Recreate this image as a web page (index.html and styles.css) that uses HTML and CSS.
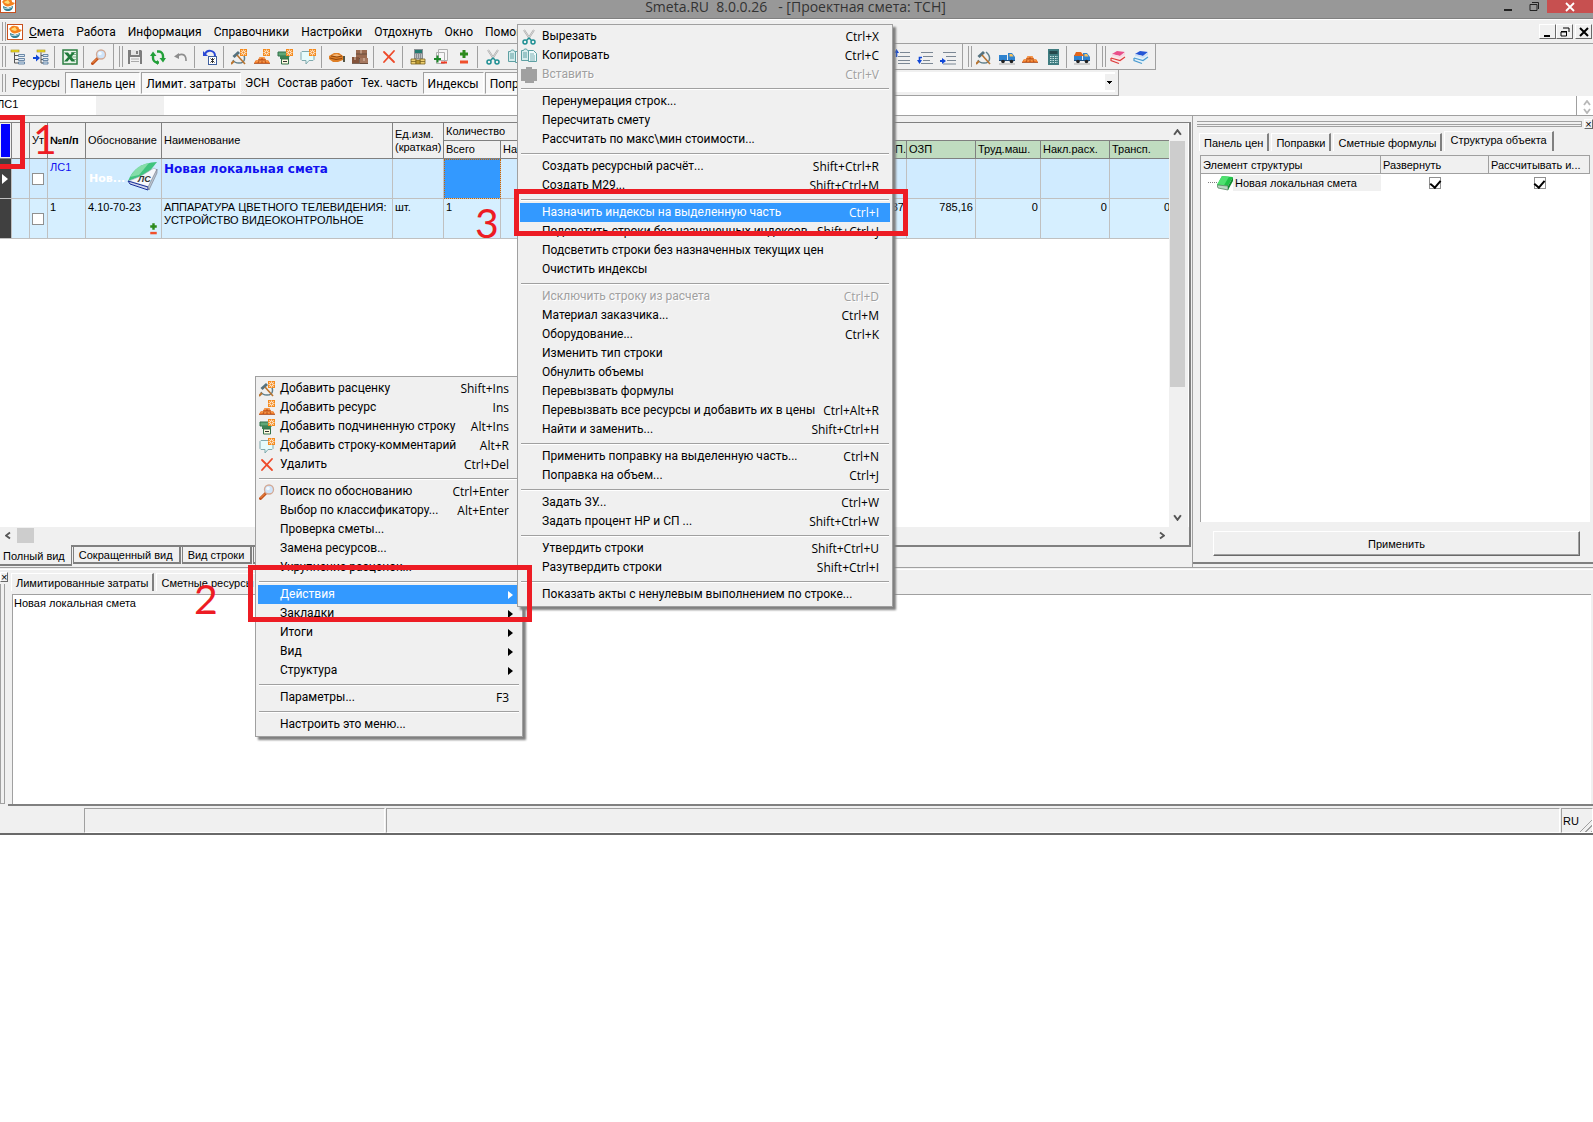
FILE: index.html
```html
<!DOCTYPE html>
<html lang="ru">
<head>
  <meta charset="UTF-8">
  <title>Smeta.RU</title>
  <link rel="stylesheet" href="styles.css">
</head>
<body>
  <!-- icon set -->
  <svg class="sprite" aria-hidden="true">
    <symbol id="i-app" viewBox="0 0 16 16">
      <rect x=".5" y=".5" width="15" height="15" fill="#fff" stroke="#c8501e"/>
      <path d="M3 9c0 3 2 5 5 5s5-2 5-5l-5 2z" fill="#2f7d92"/>
      <path d="M4 11c3 1 5 1 8-1" stroke="#b8d8e0" fill="none"/>
      <path d="M2 5c2-3 4-4 6-3 3 0 4 1 4 3l3 1-2 2-3 1c-3 1-6 0-7-3z" fill="#f5821f"/>
      <path d="M4 5l4-2 2 3-2 1-3-1z" fill="#ffd872"/>
    </symbol>
    <symbol id="i-tree" viewBox="0 0 16 16">
      <rect x="1" y="1" width="8" height="2" fill="#f4e21c" stroke="#a08a20" stroke-width=".6"/>
      <path d="M4.500 3.500v10.500M4.500 6.500h4M4.500 10.500h4M4.500 14h4" stroke="#555" fill="none"/>
      <path d="M8.500 5.500h6v2h-6zM8.500 9.500h6v2h-6zM8.500 13h6v2h-6z" fill="#dbe9f5" stroke="#4b6f94" stroke-width=".8"/>
    </symbol>
    <symbol id="i-tree-in" viewBox="0 0 16 16">
      <rect x="4" y="1" width="8" height="2" fill="#f4e21c" stroke="#a08a20" stroke-width=".6"/>
      <path d="M8 3.500v10.500M8 6.500h2M8 10.500h2M8 14h2" stroke="#555" fill="none"/>
      <path d="M10 5.500h5v2h-5zM10 9.500h5v2h-5zM10 13h5v2h-5z" fill="#dbe9f5" stroke="#4b6f94" stroke-width=".8"/>
      <path d="M0 8h3V5.500L7 9l-4 3.500V10H0z" fill="#1047d8"/>
    </symbol>
    <symbol id="i-excel" viewBox="0 0 16 16">
      <rect x="1" y="1" width="14" height="14" fill="#e9f4ea" stroke="#2d7f43" stroke-width="1.500"/>
      <path d="M9 3.500h5M9 5.500h5M9 8h5M9 10.500h5" stroke="#5aa06c" stroke-width=".8"/>
      <path d="M2 3.500h4l2 2.500 2-2.500h3L9.500 8l4 4.500H9.500L7.500 10l-2 2.500H2L6 8z" fill="#1f7a3a"/>
    </symbol>
    <symbol id="i-lens" viewBox="0 0 16 16">
      <path d="M1.500 14.500L7 9" stroke="#c4511b" stroke-width="3" stroke-linecap="round"/>
      <path d="M1.500 14L6 9.500" stroke="#f39a50" stroke-width="1"/>
      <circle cx="10" cy="5.500" r="4.500" fill="#cfe4fa" stroke="#d3a995" stroke-width="1.300"/>
      <circle cx="9" cy="4.500" r="1.800" fill="#f3faff"/>
    </symbol>
    <symbol id="i-save" viewBox="0 0 16 16">
      <path d="M1 1h13l1 1v13H1z" fill="#7d7d7d"/>
      <path d="M4 1h8v5H4z" fill="#e4e4e4"/><path d="M9 2h2v3H9z" fill="#7d7d7d"/>
      <path d="M3 8h10v7H3z" fill="#f0f0f0"/><path d="M4 10h8M4 12.500h8" stroke="#aaa"/>
    </symbol>
    <symbol id="i-refresh" viewBox="0 0 16 16">
      <path d="M9 13.500H7A4.500 4.500 0 0 1 3 9V6M7 2.500h2A4.500 4.500 0 0 1 13 7v3" fill="none" stroke="#23a03a" stroke-width="2.400"/>
      <path d="M0 7l3-4.500L6.500 7zM9.500 9H16l-3 4.500zM8 11v5l-3-2.500z" fill="#23a03a"/>
    </symbol>
    <symbol id="i-undo" viewBox="0 0 16 16">
      <path d="M4 7c4-3 9-2 9 4v1" fill="none" stroke="#8d8d8d" stroke-width="1.600"/>
      <path d="M1 7.500L6 4v6z" fill="#8d8d8d"/>
    </symbol>
    <symbol id="i-recalc" viewBox="0 0 16 16">
      <path d="M3 5c2-5 10-4 10 2" fill="none" stroke="#2b49d6" stroke-width="2"/>
      <path d="M1 2v5h5z" fill="#2b49d6"/>
      <rect x="6.500" y="7.500" width="8" height="8" fill="#fff" stroke="#3e5f9e"/>
      <path d="M8.500 9.500l4 4M12.500 9.500l-4 4M10.500 9v5" stroke="#333"/>
    </symbol>
    <symbol id="i-hammer" viewBox="0 0 16 16">
      <path d="M10 3c5 4 5 11-2 11-3 0-5-1-6-3" fill="none" stroke="#5e7f8c" stroke-width="1.500"/>
      <path d="M0 15L3 12" stroke="#b9742f" stroke-width="2"/>
      <path d="M2.500 8L8 3" stroke="#54727f" stroke-width="3"/>
      <path d="M6 6l8 9" stroke="#b9742f" stroke-width="1.600"/>
    </symbol>
    <symbol id="i-star" viewBox="0 0 16 16">
      <rect x="9" y="0" width="7" height="7" fill="#f58a1c"/>
      <circle cx="12.500" cy="3.500" r="1.600" fill="none" stroke="#fff" stroke-width="1"/>
      <path d="M12.500 .5v1M12.500 5.500v1M9.500 3.500h1M14.500 3.500h1M10.300 1.300l.8.800M14.700 1.300l-.8.800M10.300 5.700l.8-.8M14.700 5.700l-.8-.8" stroke="#fff" stroke-width=".8"/>
    </symbol>
    <symbol id="i-bricks" viewBox="0 0 16 16">
      <path d="M0 13l2-3h2l1.500-3h5L12 10h2l2 3z" fill="#ee7a28"/>
      <path d="M5 8h6M2 11h12" stroke="#f9b06d" stroke-width="1"/>
      <path d="M4 10h8M0 13.500h16M5 11l-1 2M8 8v2M8 11v2M11 11l1 2" stroke="#a8430f" stroke-width=".8"/>
    </symbol>
    <symbol id="i-rate-add" viewBox="0 0 16 16"><use href="#i-hammer"/><use href="#i-star"/></symbol>
    <symbol id="i-res-add" viewBox="0 0 16 16">
      <g transform="translate(0 1)"><use href="#i-bricks" width="16" height="16"/></g><use href="#i-star"/>
    </symbol>
    <symbol id="i-sub-add" viewBox="0 0 16 16">
      <path d="M1 3h12v4H1z" fill="#5fa777" stroke="#33704a"/>
      <path d="M3 7h9v3H3z" fill="#3c8254"/>
      <path d="M4.500 10h7v5h-7z" fill="#fffbe0" stroke="#33704a"/><path d="M6 12.500h4" stroke="#333"/>
      <use href="#i-star"/>
    </symbol>
    <symbol id="i-note-add" viewBox="0 0 16 16">
      <path d="M2 2.500h11l1 1v7l-1 1H9L6 15v-3.500H2l-1-1v-7z" fill="#e6fbfb" stroke="#7fa9ad"/>
      <use href="#i-star"/>
    </symbol>
    <symbol id="i-hands" viewBox="0 0 16 16">
      <path d="M0 7l5-3h5l4 3v4l-5 2H4L0 10z" fill="#df7f26"/>
      <path d="M3 6l5-1 4 2-5 1z" fill="#f6b878"/>
      <path d="M2 7l6 1 5-1M1 9l6 1.500 6-1" stroke="#8e450b" fill="none"/>
      <path d="M14 7h2v6h-2z" fill="#554"/>
    </symbol>
    <symbol id="i-boxes" viewBox="0 0 16 16">
      <path d="M4 1h11v9H4z" fill="#9a6a50"/><path d="M0 8h7v6H0z" fill="#84543c"/><path d="M8 9h8v6H8z" fill="#a67860"/>
      <path d="M9 1v4M12 9v3M3 8v3" stroke="#e1c4b0"/><path d="M4 5h11M0 14.500h16M7.500 9v5" stroke="#5c4436" stroke-width=".8"/>
    </symbol>
    <symbol id="i-delete" viewBox="0 0 16 16">
      <path d="M3 3l10 10M13 2L3 13" stroke="#ee4a2a" stroke-width="1.800" stroke-linecap="round"/>
    </symbol>
    <symbol id="i-calc-coins" viewBox="0 0 16 16">
      <path d="M4 0h9v10H4z" fill="#8a8f93"/><path d="M5 1h7v3H5z" fill="#227b70"/>
      <path d="M5 6h7M5 8h7" stroke="#eee" stroke-dasharray="1 1"/>
      <path d="M1 10h5v5H1zM10 10h5v5h-5z" fill="#f0d070" stroke="#7a6320" stroke-width=".8"/>
      <path d="M1 12.500h5M10 12.500h5M6 11h4v4H6z" stroke="#7a6320" stroke-width=".8" fill="#b8962e"/>
    </symbol>
    <symbol id="i-doc-pm" viewBox="0 0 16 16">
      <path d="M5.500 .5h9v11h-9zM3.500 3.500h8v11h-8z" fill="#f7f7f7" stroke="#b0b0b0"/>
      <path d="M1 10h7M4.500 6.500v7" stroke="#1e8a2a" stroke-width="2"/>
      <path d="M8 13.500h6" stroke="#ee3a24" stroke-width="2"/>
    </symbol>
    <symbol id="i-pm" viewBox="0 0 16 16">
      <path d="M4 5h8M8 1v8" stroke="#2d8b1d" stroke-width="3"/>
      <path d="M4 13h8" stroke="#f0502c" stroke-width="3"/>
    </symbol>
    <symbol id="i-cut" viewBox="0 0 16 16">
      <path d="M3 1l6 9M13 1L7 10" stroke="#a8a8a8" stroke-width="2"/>
      <path d="M3 1l6 9M13 1L7 10" stroke="#eee" stroke-width=".7"/>
      <circle cx="4" cy="13" r="2" fill="none" stroke="#1e8f93" stroke-width="1.500"/>
      <circle cx="12" cy="13" r="2" fill="none" stroke="#1e8f93" stroke-width="1.500"/>
      <path d="M5.500 11.500L8 9l2.500 2.500" fill="none" stroke="#1e8f93" stroke-width="1.300"/>
    </symbol>
    <symbol id="i-copy" viewBox="0 0 16 16">
      <path d="M.5 2.500h2l1-1.500h2l1 1.500h2v10h-8z" fill="#d5ecec" stroke="#5fa0a3"/>
      <path d="M2 5h4M2 7h4M2 9h4" stroke="#5fa0a3"/>
      <path d="M7.500 2.500h5l3 3v8h-8z" fill="#effafa" stroke="#5fa0a3"/>
      <path d="M9 6h4M9 8h5M9 10h5M9 12h5" stroke="#5fa0a3" stroke-width=".8"/>
    </symbol>
    <symbol id="i-paste" viewBox="0 0 16 16">
      <path d="M0 2h5V0h6v2h5v12h-3v2H4v-2H0z" fill="#a0a0a0"/>
    </symbol>
    <symbol id="i-lines-up" viewBox="0 0 16 16">
      <path d="M6 3.500h10M4 7.500h12M4 11.500h12M4 14.500h12" stroke="#7b8794"/>
      <path d="M2.500 2v6" stroke="#1047d8" stroke-width="1.600"/><path d="M0 4l2.500-4L5 4z" fill="#1047d8"/>
    </symbol>
    <symbol id="i-lines-down" viewBox="0 0 16 16">
      <path d="M4 3.500h12M6 7.500h10M6 11.500h7M4 14.500h12" stroke="#7b8794"/>
      <path d="M5 8.500H2.500V12" stroke="#1047d8" stroke-width="1.600" fill="none"/><path d="M0 11h5l-2.500 4z" fill="#1047d8"/>
    </symbol>
    <symbol id="i-lines-in" viewBox="0 0 16 16">
      <path d="M3 3.500h13M6 7.500h10M7 11.500h9M3 15h13" stroke="#7b8794"/>
      <path d="M0 12h3" stroke="#1047d8" stroke-width="2"/><path d="M2 9l4 3-4 3z" fill="#1047d8"/>
    </symbol>
    <symbol id="i-truck" viewBox="0 0 16 16">
      <path d="M0 6h8v5H0z" fill="#2f83cf"/><path d="M9 4h4l3 4v3H9z" fill="#2f83cf"/><path d="M10.500 5h2.500l1.500 2.500h-4z" fill="#f8c15c"/>
      <path d="M0 11.500h16" stroke="#1c4a78"/><circle cx="4" cy="12.500" r="1.800" fill="#222"/><circle cx="12.500" cy="12.500" r="1.800" fill="#222"/>
      <path d="M0 15h16" stroke="#aaa"/>
    </symbol>
    <symbol id="i-truck-full" viewBox="0 0 16 16">
      <use href="#i-truck"/><path d="M0 7l2-4h5l3 4z" fill="#e2661b"/>
    </symbol>
    <symbol id="i-calc" viewBox="0 0 16 16">
      <path d="M3 0h11v16H3z" fill="#3f7c80"/><path d="M4.500 2h8v3h-8z" fill="#25484b"/>
      <path d="M5 7.500h8M5 9.500h8M5 11.500h8M5 13.500h8" stroke="#c9e4e4" stroke-dasharray="1.500 1"/>
    </symbol>
    <symbol id="i-books-red" viewBox="0 0 16 16">
      <path d="M2 5l5-3 8 1-5 4z" fill="#e9508a"/><path d="M2 5l8 2 5-4v3l-5 4-8-2z" fill="#f6d9e2"/>
      <path d="M0 9l3-2 7 2 5-3v4l-5 4-9-3z" fill="#f9eaea"/><path d="M1 9l9 2.500L15 8M1 9v2.500l8 3" stroke="#dd3b3b" fill="none" stroke-width="1.200"/>
    </symbol>
    <symbol id="i-books-blue" viewBox="0 0 16 16">
      <path d="M2 5l5-3 8 1-5 4z" fill="#2456d6"/><path d="M2 5l8 2 5-4v3l-5 4-8-2z" fill="#cfe0f3"/>
      <path d="M0 9l3-2 7 2 5-3v4l-5 4-9-3z" fill="#e4f2f9"/><path d="M1 9l9 2.500L15 8M1 9v2.500l8 3" stroke="#4a9bd0" fill="none" stroke-width="1.200"/>
    </symbol>
    <symbol id="i-book" viewBox="0 0 16 16">
      <path d="M5 1l11 1-5 9-11-1z" fill="#1fc447"/><path d="M5 1l7 .7-5 8.500-7-.7z" fill="#4fe070"/>
      <path d="M0 10l11 1v4L1 13z" fill="#b9d8c2" stroke="#4b7a57" stroke-width=".7"/><path d="M16 2l-5 9v4l5-9z" fill="#128a30"/>
    </symbol>
    <symbol id="i-book-ls" viewBox="0 0 32 30">
      <path d="M1 20C6 8 14 2 30 1L22 11 12 16z" fill="#3fc47e"/><path d="M3 16C8 8 12 4 22 2L12 14z" fill="#85dda9"/>
      <path d="M2 20l12-5L27 7l3 2-8 17z" fill="#f6f8fc" stroke="#9ab" stroke-width=".6"/>
      <path d="M1 20l20 6v3L3 23z" fill="#cfd6ea" stroke="#1a2d9a" stroke-width="1"/>
      <path d="M21 26L30 8v4l-8 17z" fill="#b9c4cf" stroke="#667" stroke-width=".5"/>
      <text x="11" y="21" font-size="9" font-weight="bold" font-style="italic" font-family="Liberation Sans, sans-serif" fill="#333">ЛС</text>
    </symbol>
  </svg>

  <div class="app">
    <header class="titlebar">
      <svg class="icon"><use href="#i-app"/></svg>
      <h1>Smeta.RU&nbsp; 8.0.0.26&nbsp;&nbsp; - [Проектная смета: ТСН]</h1>
      <div class="window-buttons">
        <button aria-label="Свернуть"><svg viewBox="0 0 10 10"><path d="M1 8h8" stroke="#222" stroke-width="2"/></svg></button>
        <button aria-label="Развернуть окно"><svg viewBox="0 0 10 10"><path d="M1 2.500h7v6H1zM3 .5h6.500V7" stroke="#222" fill="none"/></svg></button>
        <button class="close" aria-label="Закрыть"><svg viewBox="0 0 10 10"><path d="M1 1l8 8M9 1L1 9" stroke="#fff" stroke-width="1.800"/></svg></button>
      </div>
    </header>

    <nav class="menubar">
      <span class="grip"></span>
      <svg class="icon"><use href="#i-app"/></svg>
      <button><u>С</u>мета</button>
      <button>Работа</button>
      <button>Информация</button>
      <button>Справочники</button>
      <button>Настройки</button>
      <button>Отдохнуть</button>
      <button>Окно</button>
      <button>Помощь</button>
      <div class="mdi-buttons">
        <button aria-label="Свернуть смету"><svg viewBox="0 0 10 10"><path d="M1 9h6" stroke="#000" stroke-width="2"/></svg></button>
        <button aria-label="Восстановить смету"><svg viewBox="0 0 10 10"><path d="M3 1h6v4M1 5h5.500v4H1zM1 4.500h6" stroke="#000" fill="none"/></svg></button>
        <button aria-label="Закрыть смету"><svg viewBox="0 0 10 10"><path d="M1 1l8 8M9 1L1 9" stroke="#000" stroke-width="2"/></svg></button>
      </div>
    </nav>

    <div class="toolbars">
      <div class="toolbar">
        <span class="grip"></span>
        <button aria-label="Дерево"><svg class="icon"><use href="#i-tree"/></svg></button>
        <button aria-label="Вложить"><svg class="icon"><use href="#i-tree-in"/></svg></button>
        <span class="sep"></span>
        <button aria-label="Excel"><svg class="icon"><use href="#i-excel"/></svg></button>
        <span class="sep"></span>
        <button aria-label="Поиск"><svg class="icon"><use href="#i-lens"/></svg></button>
      </div>
      <div class="toolbar">
        <span class="grip"></span>
        <button aria-label="Сохранить"><svg class="icon"><use href="#i-save"/></svg></button>
        <button aria-label="Обновить"><svg class="icon"><use href="#i-refresh"/></svg></button>
        <button aria-label="Отменить"><svg class="icon"><use href="#i-undo"/></svg></button>
        <span class="sep"></span>
        <button aria-label="Пересчитать"><svg class="icon"><use href="#i-recalc"/></svg></button>
        <span class="sep"></span>
        <button aria-label="Добавить расценку"><svg class="icon"><use href="#i-rate-add"/></svg></button>
        <button aria-label="Добавить ресурс"><svg class="icon"><use href="#i-res-add"/></svg></button>
        <button aria-label="Добавить подчиненную"><svg class="icon"><use href="#i-sub-add"/></svg></button>
        <button aria-label="Добавить комментарий"><svg class="icon"><use href="#i-note-add"/></svg></button>
        <span class="sep"></span>
        <button aria-label="Труд"><svg class="icon"><use href="#i-hands"/></svg></button>
        <button aria-label="Материалы"><svg class="icon"><use href="#i-boxes"/></svg></button>
        <span class="sep"></span>
        <button aria-label="Удалить"><svg class="icon"><use href="#i-delete"/></svg></button>
        <span class="sep"></span>
        <button aria-label="Стоимость"><svg class="icon"><use href="#i-calc-coins"/></svg></button>
        <button aria-label="Поправка"><svg class="icon"><use href="#i-doc-pm"/></svg></button>
        <button aria-label="Плюс-минус"><svg class="icon"><use href="#i-pm"/></svg></button>
        <span class="sep"></span>
        <button aria-label="Вырезать"><svg class="icon"><use href="#i-cut"/></svg></button>
        <button aria-label="Копировать"><svg class="icon"><use href="#i-copy"/></svg></button>
        <span class="toolbar-space"></span>
        <button aria-label="Выше"><svg class="icon"><use href="#i-lines-up"/></svg></button>
        <button aria-label="Ниже"><svg class="icon"><use href="#i-lines-down"/></svg></button>
        <button aria-label="Вправо"><svg class="icon"><use href="#i-lines-in"/></svg></button>
      </div>
      <div class="toolbar">
        <span class="grip"></span>
        <button aria-label="Работы"><svg class="icon"><use href="#i-hammer"/></svg></button>
        <button aria-label="Машины"><svg class="icon"><use href="#i-truck"/></svg></button>
        <button aria-label="Материалы и изделия"><svg class="icon"><use href="#i-bricks"/></svg></button>
        <button aria-label="Калькулятор"><svg class="icon"><use href="#i-calc"/></svg></button>
        <span class="sep"></span>
        <button aria-label="Перевозка"><svg class="icon"><use href="#i-truck-full"/></svg></button>
      </div>
      <div class="toolbar">
        <span class="grip"></span>
        <button aria-label="Красный справочник"><svg class="icon"><use href="#i-books-red"/></svg></button>
        <button aria-label="Синий справочник"><svg class="icon"><use href="#i-books-blue"/></svg></button>
      </div>
    </div>

    <div class="textbar">
      <span class="grip"></span>
      <button>Ресурсы</button>
      <button class="pressed">Панель цен</button>
      <button class="pressed">Лимит. затраты</button>
      <button>ЭСН</button>
      <button>Состав работ</button>
      <button>Тех. часть</button>
      <button class="pressed">Индексы</button>
      <button class="pressed">Поправки</button>
      <select aria-label="Фильтр"><option></option></select>
    </div>

    <div class="editbar">
      <input class="cell-name" aria-label="Ячейка" value="ЛС1">
      <span class="cell-kind"></span>
      <input class="cell-value" aria-label="Значение">
      <div class="mini-scroll">
        <svg viewBox="0 0 8 6"><path d="M1 5l3-4 3 4" fill="none" stroke="#b8b8b8" stroke-width="1.800"/></svg>
        <svg viewBox="0 0 8 6"><path d="M1 1l3 4 3-4" fill="none" stroke="#b8b8b8" stroke-width="1.800"/></svg>
      </div>
    </div>

    <div class="workspace">
      <section class="estimate">
        <div class="sheet">
          <div class="sheet-view">
            <table>
              <colgroup>
                <col class="c-mark"><col class="c-flag"><col class="c-flag"><col class="c-num"><col class="c-code"><col class="c-name">
                <col class="c-unit"><col class="c-total"><col><col class="c-zp"><col class="c-ozp"><col class="c-mach"><col class="c-over"><col class="c-trans">
              </colgroup>
              <thead>
                <tr>
                  <th rowspan="2" class="corner"><span></span></th>
                  <th rowspan="2"></th>
                  <th rowspan="2">Ут</th>
                  <th rowspan="2" class="strong">№п/п</th>
                  <th rowspan="2">Обоснование</th>
                  <th rowspan="2">Наименование</th>
                  <th rowspan="2">Ед.изм.<br>(краткая)</th>
                  <th colspan="7">Количество</th>
                </tr>
                <tr>
                  <th>Всего</th>
                  <th>На ед.</th>
                  <th class="green end">ЗП.</th>
                  <th class="green">ОЗП</th>
                  <th class="green">Труд.маш.</th>
                  <th class="green">Накл.расх.</th>
                  <th class="green">Трансп.</th>
                </tr>
              </thead>
              <tbody>
                <tr class="section-row">
                  <td class="mark"><svg viewBox="0 0 6 10"><path d="M0 0l6 5-6 5z" fill="#fff"/></svg></td>
                  <td></td>
                  <td class="tick"><input type="checkbox" aria-label="Учитывать ЛС1"></td>
                  <td class="blue">ЛС1</td>
                  <td><div class="book-cell"><b>Нов...</b><svg><use href="#i-book-ls"/></svg></div></td>
                  <td class="section-name">Новая локальная смета</td>
                  <td></td>
                  <td class="selected"></td>
                  <td></td><td></td><td></td><td></td><td></td><td></td>
                </tr>
                <tr>
                  <td class="mark"></td>
                  <td></td>
                  <td class="tick"><input type="checkbox" aria-label="Учитывать строку 1"></td>
                  <td>1</td>
                  <td>4.10-70-23<svg class="pm"><use href="#i-pm"/></svg></td>
                  <td>АППАРАТУРА ЦВЕТНОГО ТЕЛЕВИДЕНИЯ: УСТРОЙСТВО ВИДЕОКОНТРОЛЬНОЕ</td>
                  <td>шт.</td>
                  <td>1</td>
                  <td></td>
                  <td class="end">37</td>
                  <td class="end">785,16</td>
                  <td class="end">0</td>
                  <td class="end">0</td>
                  <td class="end">0</td>
                </tr>
              </tbody>
            </table>
          </div>
          <div class="vscroll">
            <svg viewBox="0 0 8 6"><path d="M1 5l3-4 3 4" fill="none" stroke="#555" stroke-width="1.800"/></svg>
            <span class="thumb"></span>
            <svg viewBox="0 0 8 6"><path d="M1 1l3 4 3-4" fill="none" stroke="#555" stroke-width="1.800"/></svg>
          </div>
        </div>
        <div class="hscroll">
          <svg viewBox="0 0 6 8"><path d="M5 1L1 4l4 3" fill="none" stroke="#555" stroke-width="1.800"/></svg>
          <span class="thumb"></span>
          <svg viewBox="0 0 6 8"><path d="M1 1l4 3-4 3" fill="none" stroke="#555" stroke-width="1.800"/></svg>
        </div>
        <div class="view-tabs">
          <button class="active">Полный вид</button>
          <button>Сокращенный вид</button>
          <button>Вид строки</button>
          <button>График</button>
        </div>
      </section>

      <aside class="structure">
        <div class="dock-head"><span class="dock-grip"></span><button aria-label="Закрыть панель">×</button></div>
        <div class="tabs">
          <button>Панель цен</button>
          <button>Поправки</button>
          <button>Сметные формулы</button>
          <button class="active">Структура объекта</button>
        </div>
        <div class="tree">
          <table>
            <colgroup><col><col class="t-expand"><col class="t-calc"></colgroup>
            <thead>
              <tr><th>Элемент структуры</th><th>Развернуть</th><th>Рассчитывать и...</th></tr>
            </thead>
            <tbody>
              <tr>
                <td><div class="node"><span class="dots"></span><svg class="icon"><use href="#i-book"/></svg><span class="node-name">Новая локальная смета</span></div></td>
                <td><input type="checkbox" aria-label="Развернуть" checked></td>
                <td><input type="checkbox" aria-label="Рассчитывать" checked></td>
              </tr>
            </tbody>
          </table>
        </div>
        <button class="apply">Применить</button>
      </aside>
    </div>

    <section class="bottom">
      <div class="bottom-dock"><button aria-label="Закрыть нижнюю панель">×</button><span class="dock-grip"></span></div>
      <div class="bottom-main">
        <div class="tabs">
          <button>Лимитированные затраты</button>
          <button>Сметные ресурсы</button>
        </div>
        <div class="bottom-view">Новая локальная смета</div>
      </div>
    </section>

    <footer class="statusbar">
      <span></span>
      <span class="cell"></span>
      <span class="cell"></span>
      <span class="cell lang">RU</span>
    </footer>
  </div>

  <ul class="menu menu-row">
    <li><button><svg class="icon"><use href="#i-rate-add"/></svg>Добавить расценку<kbd>Shift+Ins</kbd></button></li>
    <li><button><svg class="icon"><use href="#i-res-add"/></svg>Добавить ресурс<kbd>Ins</kbd></button></li>
    <li><button><svg class="icon"><use href="#i-sub-add"/></svg>Добавить подчиненную строку<kbd>Alt+Ins</kbd></button></li>
    <li><button><svg class="icon"><use href="#i-note-add"/></svg>Добавить строку-комментарий<kbd>Alt+R</kbd></button></li>
    <li><button><svg class="icon"><use href="#i-delete"/></svg>Удалить<kbd>Ctrl+Del</kbd></button></li>
    <li class="line"></li>
    <li><button><svg class="icon"><use href="#i-lens"/></svg>Поиск по обоснованию<kbd>Ctrl+Enter</kbd></button></li>
    <li><button><i></i>Выбор по классификатору...<kbd>Alt+Enter</kbd></button></li>
    <li><button><i></i>Проверка сметы...</button></li>
    <li><button><i></i>Замена ресурсов...</button></li>
    <li><button><i></i>Укрупнение расценок...</button></li>
    <li class="line"></li>
    <li><button class="current sub"><i></i>Действия</button></li>
    <li><button class="sub"><i></i>Закладки</button></li>
    <li><button class="sub"><i></i>Итоги</button></li>
    <li><button class="sub"><i></i>Вид</button></li>
    <li><button class="sub"><i></i>Структура</button></li>
    <li class="line"></li>
    <li><button><i></i>Параметры...<kbd>F3</kbd></button></li>
    <li class="line"></li>
    <li><button><i></i>Настроить это меню...</button></li>
  </ul>

  <ul class="menu menu-actions">
    <li><button><svg class="icon"><use href="#i-cut"/></svg>Вырезать<kbd>Ctrl+X</kbd></button></li>
    <li><button><svg class="icon"><use href="#i-copy"/></svg>Копировать<kbd>Ctrl+C</kbd></button></li>
    <li><button disabled><svg class="icon"><use href="#i-paste"/></svg>Вставить<kbd>Ctrl+V</kbd></button></li>
    <li class="line"></li>
    <li><button><i></i>Перенумерация строк...</button></li>
    <li><button><i></i>Пересчитать смету</button></li>
    <li><button><i></i>Рассчитать по макс\мин стоимости...</button></li>
    <li class="line"></li>
    <li><button><i></i>Создать ресурсный расчёт...<kbd>Shift+Ctrl+R</kbd></button></li>
    <li><button><i></i>Создать М29...<kbd>Shift+Ctrl+M</kbd></button></li>
    <li class="line"></li>
    <li><button class="current"><i></i>Назначить индексы на выделенную часть<kbd>Ctrl+I</kbd></button></li>
    <li><button><i></i>Подсветить строки без назначенных индексов<kbd>Shift+Ctrl+J</kbd></button></li>
    <li><button><i></i>Подсветить строки без назначенных текущих цен</button></li>
    <li><button><i></i>Очистить индексы</button></li>
    <li class="line"></li>
    <li><button disabled><i></i>Исключить строку из расчета<kbd>Ctrl+D</kbd></button></li>
    <li><button><i></i>Материал заказчика...<kbd>Ctrl+M</kbd></button></li>
    <li><button><i></i>Оборудование...<kbd>Ctrl+K</kbd></button></li>
    <li><button><i></i>Изменить тип строки</button></li>
    <li><button><i></i>Обнулить объемы</button></li>
    <li><button><i></i>Перевызвать формулы</button></li>
    <li><button><i></i>Перевызвать все ресурсы и добавить их в цены<kbd>Ctrl+Alt+R</kbd></button></li>
    <li><button><i></i>Найти и заменить...<kbd>Shift+Ctrl+H</kbd></button></li>
    <li class="line"></li>
    <li><button><i></i>Применить поправку на выделенную часть...<kbd>Ctrl+N</kbd></button></li>
    <li><button><i></i>Поправка на объем...<kbd>Ctrl+J</kbd></button></li>
    <li class="line"></li>
    <li><button><i></i>Задать ЗУ...<kbd>Ctrl+W</kbd></button></li>
    <li><button><i></i>Задать процент НР и СП ...<kbd>Shift+Ctrl+W</kbd></button></li>
    <li class="line"></li>
    <li><button><i></i>Утвердить строки<kbd>Shift+Ctrl+U</kbd></button></li>
    <li><button><i></i>Разутвердить строки<kbd>Shift+Ctrl+I</kbd></button></li>
    <li class="line"></li>
    <li><button><i></i>Показать акты с ненулевым выполнением по строке...</button></li>
  </ul>

  <!-- step marks -->
  <div class="frame frame-1"></div><span class="step step-1">1</span>
  <div class="frame frame-2"></div><span class="step step-2">2</span>
  <div class="frame frame-3"></div><span class="step step-3">3</span>
</body>
</html>
```
FILE: styles.css
```css
* {
  box-sizing: border-box;
}
body {
  margin: 0;
  position: relative;
  background: #fff;
  color: #000;
  font: 11px/16px "Liberation Sans", Arial, sans-serif;
  overflow-x: hidden;
}
button, input, select {
  font: inherit;
  color: inherit;
  margin: 0;
  padding: 0;
  border: 0;
  background: none;
  border-radius: 0;
}
.sprite {
  position: absolute;
  width: 0;
  height: 0;
}
.icon {
  width: 16px;
  height: 16px;
  flex: none;
}
.app {
  background: #f0f0f0;
  border-bottom: 2px solid #696969;
}

/* title */
.titlebar {
  display: flex;
  justify-content: space-between;
  height: 19px;
  background: #989898;
  border-bottom: 1px solid #808080;
  overflow: hidden;
}
.titlebar > .icon {
  margin-top: -3px;
  margin-right: 80px;
}
.titlebar h1 {
  margin: 0;
  font: 14px/14px "Open Sans", sans-serif;
  color: #333;
  white-space: nowrap;
}
.window-buttons {
  display: flex;
}
.window-buttons button {
  width: 26px;
  height: 13px;
}
.window-buttons .close {
  width: 46px;
  background: #c75050;
}
.window-buttons svg {
  width: 10px;
  height: 10px;
  display: block;
  margin: 0 auto;
}

/* menu bar */
.menubar {
  display: flex;
  align-items: center;
  height: 25px;
  padding: 0 1px 0 2px;
  border-top: 1px solid #fff;
  border-bottom: 1px solid #a0a0a0;
  font: 12px/16px Roboto, sans-serif;
}
.menubar > button {
  padding: 0 6px;
}
.menubar > .icon {
  margin: 0 0 0 1px;
}
.grip {
  width: 4px;
  align-self: stretch;
  margin: 2px 0;
  border: solid #a0a0a0;
  border-width: 0 1px;
  flex: none;
}
.mdi-buttons {
  display: flex;
  margin-left: auto;
}
.mdi-buttons button {
  width: 17px;
  height: 15px;
  background: #f0f0f0;
  border: 1px solid;
  border-color: #fff #696969 #696969 #fff;
}
.mdi-buttons button:last-child {
  margin-left: 2px;
}
.mdi-buttons svg {
  display: block;
  width: 10px;
  height: 10px;
  margin: 0 auto;
}

/* toolbars */
.toolbars {
  display: flex;
  height: 26px;
}
.toolbar {
  display: flex;
  align-items: center;
  padding: 0 3px 0 2px;
  border-right: 1px solid #a0a0a0;
  border-bottom: 1px solid #a0a0a0;
}
.toolbar + .toolbar {
  padding-left: 5px;
}
.toolbar button {
  width: 23px;
  height: 22px;
  display: flex;
  align-items: center;
  justify-content: center;
  flex: none;
}
.sep {
  width: 6px;
  height: 22px;
  flex: none;
  background: linear-gradient(#a0a0a0, #a0a0a0) 2px 0 / 1px 100% no-repeat;
}
.toolbar-space {
  width: 363px;
}
.textbar {
  display: flex;
  width: 1119px;
  max-width: 100%;
  height: 26px;
  padding: 2px 3px 1px 2px;
  border-right: 1px solid #a0a0a0;
  border-bottom: 1px solid #a0a0a0;
  font: 12px/20px Roboto, sans-serif;
}
.textbar .grip {
  margin-right: 2px;
}
.textbar button {
  padding: 0 4px;
  white-space: nowrap;
}
.textbar .pressed {
  margin-left: 1px;
  background: #f8f8f8;
  border: 1px solid;
  border-color: #a0a0a0 #fff #fff #a0a0a0;
  line-height: 22px;
}
.textbar select {
  flex: 1;
  appearance: none;
  height: 20px;
  background: linear-gradient(#000, #000) right 3px top 9px / 5px 1px no-repeat,
    linear-gradient(#000, #000) right 4px top 10px / 3px 1px no-repeat,
    linear-gradient(#000, #000) right 5px top 11px / 1px 1px no-repeat,
    linear-gradient(#f0f0f0, #f0f0f0) right 0 top 2px / 10px 16px no-repeat, #fff;
}

/* edit line */
.editbar {
  display: flex;
  height: 20px;
  background: #fff;
  border-bottom: 1px solid #a0a0a0;
}
.cell-name {
  width: 96px;
  text-indent: -3px;
  height: 16px;
}
.cell-kind {
  width: 68px;
  background: #f0f0f0;
}
.cell-value {
  flex: 1;
}
.mini-scroll {
  width: 17px;
  border-left: 1px solid #a0a0a0;
  display: flex;
  flex-direction: column;
  justify-content: space-around;
  align-items: flex-end;
  padding: 3px 2px 0;
}
.mini-scroll svg {
  width: 8px;
  height: 6px;
}

/* work area */
.workspace {
  display: flex;
  border-bottom: 1px solid #a0a0a0;
}
.estimate {
  flex: 1;
  min-width: 0;
  padding-top: 6px;
  display: flex;
  flex-direction: column;
  border-right: 1px solid #a0a0a0;
}
.sheet {
  display: flex;
  min-height: 405px;
  flex: 1;
  background: #fff;
  border-top: 1px solid #808080;
  margin-right: 1px;
  border-right: 2px solid #808080;
}
.sheet-view {
  flex: 1;
  min-width: 0;
  overflow: hidden;
}
.sheet table {
  table-layout: fixed;
  width: calc(100% + 4px);
  border-spacing: 0;
  font-size: 11px;
  line-height: 13px;
}
.c-mark { width: 12px; }
.c-flag { width: 18px; }
.c-num { width: 38px; }
.c-code { width: 76px; }
.c-name { width: 231px; }
.c-unit { width: 51px; }
.c-total { width: 57px; }
.c-zp { width: 60px; }
.c-ozp { width: 69px; }
.c-mach { width: 65px; }
.c-over { width: 69px; }
.c-trans { width: 63px; }
.sheet th {
  background: #f0f0f0;
  border-right: 1px solid #808080;
  border-bottom: 1px solid #808080;
  padding: 0 0 0 2px;
  height: 18px;
  font-weight: normal;
  text-align: left;
  white-space: nowrap;
  overflow: hidden;
}
.sheet .strong {
  font-weight: bold;
}
.sheet .corner {
  padding: 1px;
}
.corner span {
  display: block;
  height: 33px;
  background: #00f;
}
.sheet .green {
  background: #c0dcc0;
}
.sheet td {
  height: 40px;
  padding: 2px 2px 0;
  vertical-align: top;
  overflow: hidden;
  background: #d6efff;
  border-right: 1px solid #c0c0c0;
  border-bottom: 1px solid #c0c0c0;
}
.sheet .section-row td {
  background: #d0ebff;
}
.sheet .end {
  text-align: right;
}
.sheet .mark {
  background: #404040 !important;
  vertical-align: middle;
  padding: 0 2px;
}
.mark svg {
  display: block;
  width: 6px;
  height: 10px;
}
.sheet .tick {
  vertical-align: middle;
  padding: 0 2px;
}
.sheet .blue, .sheet .section-name {
  color: #1010f0;
}
.sheet .section-name {
  font: bold 12px/16px "DejaVu Sans", sans-serif;
}
input[type="checkbox"] {
  appearance: none;
  display: block;
  width: 12px;
  height: 12px;
  background: #fff;
  border: 1px solid #909090;
}
input[type="checkbox"]:checked::before {
  content: "";
  display: block;
  width: 5px;
  height: 8px;
  margin: 0 auto;
  border: solid #000;
  border-width: 0 2px 2px 0;
  transform: rotate(40deg);
}
.book-cell {
  display: flex;
  justify-content: space-between;
  align-items: center;
  color: #fff;
}
.book-cell b {
  font: bold 11px/16px "DejaVu Sans", sans-serif;
  padding: 6px 0 0 1px;
}
.book-cell svg {
  width: 32px;
  height: 30px;
  flex: none;
}
.pm {
  display: block;
  width: 13px;
  height: 14px;
  margin: 8px -1px 0 auto;
}
.sheet .selected {
  background: #39f !important;
  outline: 1px dotted #c60;
  outline-offset: -1px;
}
.vscroll {
  width: 20px;
  padding: 6px 3px 6px 0;
  border-right: 1px solid #fff;
  background: #f0f0f0;
  display: flex;
  flex-direction: column;
  align-items: center;
}
.vscroll svg {
  width: 9px;
  height: 7px;
}
.vscroll .thumb {
  width: 15px;
  height: 246px;
  margin: 5px 0 auto;
}
.thumb {
  background: #cdcdcd;
}
.hscroll {
  display: flex;
  align-items: center;
  height: 18px;
  padding: 0 24px 1px 5px;
  margin-right: 1px;
  border-right: 2px solid #808080;
}
.hscroll svg {
  width: 6px;
  height: 9px;
}
.hscroll .thumb {
  width: 17px;
  height: 15px;
  margin: 0 auto 0 6px;
}
.view-tabs {
  display: flex;
  align-items: flex-start;
  gap: 1px;
  height: 22px;
  margin-right: 1px;
  background: linear-gradient(#808080, #808080) 0 0 / 100% 2px no-repeat;
}
.view-tabs button {
  height: 19px;
  padding: 0 6px 0 5px;
  border: solid #808080;
  border-width: 2px 2px 2px 1px;
  white-space: nowrap;
}
.view-tabs .active {
  height: 21px;
  padding: 3px 6px 0 3px;
  background: #f0f0f0;
  border-width: 0 1px 2px 0;
}

/* structure pane */
.structure {
  width: 400px;
  flex: none;
  padding: 3px 0 0 4px;
  margin-bottom: 3px;
  border-bottom: 2px solid #808080;
  display: flex;
  flex-direction: column;
}
.dock-head {
  display: flex;
  align-items: center;
  height: 10px;
  gap: 2px;
}
.dock-head .dock-grip {
  flex: 1;
  height: 6px;
  border: 1px solid #a0a0a0;
  border-left: 0;
  background: linear-gradient(#a0a0a0, #a0a0a0) 0 2px / 100% 1px no-repeat;
}
.dock-head button, .bottom-dock button {
  width: 9px;
  height: 10px;
  border: 1px solid;
  border-color: #fff #696969 #696969 #fff;
  line-height: 7px;
}
.tabs {
  display: flex;
  align-items: flex-end;
  gap: 2px;
}
.tabs button {
  height: 18px;
  padding: 0 4px;
  border: solid;
  border-width: 1px 2px 0 1px;
  border-color: #fff #808080 #fff #fff;
  white-space: nowrap;
}
.tabs .active {
  height: 20px;
  padding: 0 5px 3px;
}
.structure .tabs {
  margin: 2px 0 4px 2px;
}
.tree {
  flex: 1;
  background: #fff;
  margin: 0 3px 0 3px;
  border: solid #a0a0a0;
  border-width: 1px 0 0 1px;
}
.tree table {
  width: 100%;
  table-layout: fixed;
  border-spacing: 0;
}
.t-expand { width: 108px; }
.t-calc { width: 101px; }
.tree th {
  height: 18px;
  padding: 0 2px;
  font-weight: normal;
  text-align: left;
  white-space: nowrap;
  background: #f0f0f0;
  border-right: 1px solid #a0a0a0;
  border-bottom: 1px solid #a0a0a0;
}
.tree td {
  padding: 0;
  height: 17px;
}
.tree td input {
  margin: 0 auto;
}
.node {
  display: flex;
  align-items: center;
}
.dots {
  width: 9px;
  margin-left: 7px;
  border-top: 1px dotted #808080;
}
.node-name {
  flex: 1;
  padding-left: 2px;
  background: #f0f0f0;
}
.apply {
  height: 25px;
  margin: 9px 13px 6px 16px;
  border: 1px solid;
  border-color: #fff #696969 #696969 #fff;
  box-shadow: inset -1px -1px #a0a0a0;
}

/* bottom pane */
.bottom {
  display: flex;
  border-top: 1px solid #f0f0f0;
  box-shadow: inset 0 1px #fff;
}
.bottom-dock {
  width: 8px;
  padding: 3px 3px 2px 0;
  display: flex;
  flex-direction: column;
  gap: 2px;
}
.bottom-dock button {
  width: 8px;
  flex: none;
}
.bottom-dock .dock-grip {
  flex: 1;
  width: 5px;
  border: solid #a0a0a0;
  border-width: 0 1px 1px;
}
.bottom-main {
  flex: 1;
  padding: 4px 2px 0 3px;
  border-bottom: 2px solid #808080;
}
.bottom-main .tabs {
  padding-bottom: 3px;
}
.bottom-view {
  min-height: 210px;
  margin-left: 1px;
  padding-left: 1px;
  background: #fff;
  border: solid #a0a0a0;
  border-width: 1px 0 0 1px;
}
.statusbar {
  display: grid;
  grid-template-columns: 83px 301px 1fr 32px;
  gap: 1px;
  height: 27px;
  padding-top: 2px;
}
.statusbar .cell {
  border: 1px solid;
  border-color: #a0a0a0 #fff #fff #a0a0a0;
}
.statusbar .lang {
  padding: 4px 0 0 1px;
  background: linear-gradient(135deg, #f0f0f0 50%, transparent 50%) right bottom / 12px 12px no-repeat,
    repeating-linear-gradient(135deg, #a0a0a0 0 1px, #f0f0f0 1px 4px) right bottom / 12px 12px no-repeat;
}

/* popup menus */
.menu {
  position: absolute;
  margin: 0;
  padding: 2px;
  list-style: none;
  background: #f0f0f0;
  border: 1px solid #a0a0a0;
  box-shadow: 3px 3px 2px #808080;
  font: 12px/19px Roboto, sans-serif;
}
.menu-row {
  left: 255px;
  top: 376px;
  width: 268px;
}
.menu-actions {
  left: 517px;
  top: 24px;
  width: 376px;
}
.menu button {
  display: flex;
  align-items: center;
  width: 100%;
  height: 19px;
  padding-right: 11px;
  white-space: nowrap;
}
.menu .icon, .menu i {
  width: 16px;
  flex: none;
  margin: 0 5px 0 1px;
}
.menu kbd {
  font-family: "Open Sans", sans-serif;
  margin-left: auto;
}
.menu .current {
  background: #39f;
  color: #fff;
}
.menu button:disabled {
  color: #a0a0a0;
  text-shadow: 1px 1px #fff;
}
.menu .sub::after {
  content: "";
  margin-left: auto;
  margin-right: -4px;
  border: solid transparent;
  border-width: 4px 0 4px 5px;
  border-left-color: currentColor;
}
.menu .line {
  height: 8px;
  padding-top: 4px;
}
.menu .line::before {
  content: "";
  display: block;
  height: 2px;
  margin: 0 1px;
  background: linear-gradient(#a0a0a0 50%, #fff 50%);
}

/* step marks */
.frame {
  position: absolute;
  border: 5px solid #ed1c24;
}
.frame-1 { left: 0; top: 115px; width: 25px; height: 54px; border-left: 0; }
.frame-2 { left: 248px; top: 565px; width: 284px; height: 57px; }
.frame-3 { left: 514px; top: 189px; width: 394px; height: 47px; }
.step {
  position: absolute;
  font: 41px/40px Lato, sans-serif;
  color: #ed1c24;
}
.step-1 { left: 33px; top: 119px; }
.step-2 { left: 194px; top: 579px; }
.step-3 { left: 475px; top: 203px; }
```
